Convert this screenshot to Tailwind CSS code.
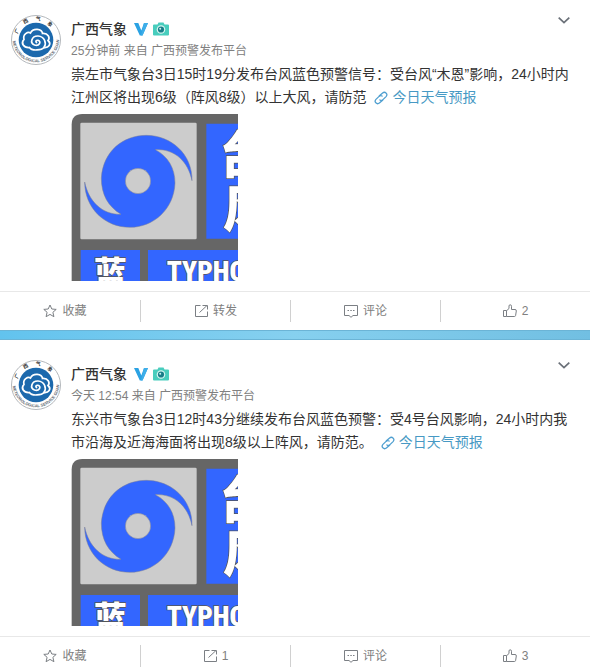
<!DOCTYPE html>
<html lang="zh-CN">
<head>
  <meta charset="UTF-8" />
  <meta name="viewport" content="width=device-width, initial-scale=1" />
  <title>广西气象的微博</title>
  <script src="https://cdn.jsdelivr.net/npm/@tailwindcss/browser@4"></script>
</head>
<body class="h-screen overflow-hidden bg-white text-[#333] font-['Liberation_Sans','Noto_Sans_CJK_SC',sans-serif]">

  <!-- 图标 -->
  <svg class="hidden" aria-hidden="true">
    <symbol id="avatar" viewBox="0 0 50 50">
      <circle cx="25" cy="25" r="24.5" fill="#fff" stroke="#b4b8bc" />
      <circle cx="25" cy="25" r="17.3" fill="#1c69ad" />
      <path id="arco-sup" d="M6.5 20 A19 19 0 0 1 43.5 20" fill="none" />
      <path id="arco-inf" d="M1.8 24 A23.2 23.2 0 0 0 48.2 24" fill="none" />
      <text font-size="5" font-weight="700" fill="#333"><textPath href="#arco-sup" startOffset="1">广 &#160; &#160; 西 &#160; &#160; 气 &#160; &#160; 象</textPath></text>
      <text font-size="4" font-weight="700" fill="#5a6570"><textPath href="#arco-inf" startOffset="2">METEOROLOGICAL SERVICE GUANGXI</textPath></text>
      <g fill="none" stroke="#fff" stroke-width="1.7" stroke-linecap="round">
        <path d="M18.5 32.5 C12.500 33 9.500 28 13 24.500 C11.500 19 17 16.500 19.500 18 C22 12.500 31 13.500 31.500 18.500 C37 18 39.500 22.500 37 25.500 C41 29 37.500 33 33 32.500 C31 35 21 36.500 18.500 32.500" />
        <path d="M33 32.500 C36 28 33.500 21.500 27 21 C20.500 20.800 18.500 28 23.500 30 C28 31.500 31 26.500 27 25.300 C25 25 24.300 26.800 25.500 27.500" />
      </g>
    </symbol>
    <symbol id="verified" viewBox="0 0 14 13">
      <path d="M0 0 H4.300 L7.300 7.500 L10 0 H14 L8.500 12.500 H5.800 Z" fill="#2ba2e3" />
      <path d="M10 0 H14 L8.500 12.500 H7 Z" fill="#3eaee9" />
    </symbol>
    <symbol id="camera" viewBox="0 0 16 14">
      <path d="M4.500 2.500 L5.500 .5 H10.500 L11.500 2.500 H15 Q16 2.500 16 3.500 V12.500 Q16 13.500 15 13.500 H1 Q0 13.500 0 12.500 V3.500 Q0 2.500 1 2.500 Z" fill="#48cdbd" />
      <circle cx="8" cy="7.500" r="4.300" fill="#d5f5f0" />
      <circle cx="8" cy="7.500" r="3.100" fill="#187d88" />
      <circle cx="7.200" cy="6.700" r="1" fill="#c8f2f0" />
    </symbol>
    <symbol id="chevron" viewBox="0 0 12 7">
      <path d="M.7 .7 L6 5.700 L11.300 .7" fill="none" stroke="#6a7078" stroke-width="1.700" />
    </symbol>
    <symbol id="link" viewBox="0 0 13 13">
      <g fill="none" stroke="#4f9fd0" stroke-width="1.200" stroke-linecap="round">
        <path d="M5 4.500 L8 1.800 Q9.700 .5 11.300 2 Q12.700 3.500 11.200 5.200 L8.300 8 Q7 9.200 5.500 8.300" />
        <path d="M8 8.500 L5 11.200 Q3.300 12.500 1.700 11 Q.3 9.500 1.800 7.800 L4.700 5 Q6 3.800 7.500 4.700" />
      </g>
    </symbol>
    <symbol id="star" viewBox="0 0 14 14">
      <path d="M7 1 L8.800 5 L13.200 5.400 L9.900 8.300 L10.900 12.700 L7 10.400 L3.100 12.700 L4.100 8.300 L.8 5.400 L5.200 5 Z" fill="none" stroke="#7b7f84" stroke-linejoin="round" />
    </symbol>
    <symbol id="share" viewBox="0 0 14 14">
      <path d="M6.500 1.500 H1.500 V12.500 H13.500 V7.500 M5.500 8.500 L13 1.500 M8.500 1.500 H13.500 V5.500" fill="none" stroke="#7b7f84" />
    </symbol>
    <symbol id="comment" viewBox="0 0 14 14">
      <path d="M.5 1.500 H13.500 V11.500 H9 L7 13.300 L5 11.500 H.5 Z" fill="none" stroke="#7b7f84" />
      <path d="M3.500 6.500 h1.500 M6.300 6.500 h1.500 M9 6.500 h1.500" stroke="#7b7f84" />
    </symbol>
    <symbol id="like" viewBox="0 0 14 14">
      <path d="M.5 6.500 H3.500 V12.500 H.5 Z M3.500 6.800 L6 4.500 V2 Q6 .8 7.200 .8 Q8.500 .8 8.500 2.300 V5.500 H12 Q13.500 5.500 13.300 7 L12.600 11.500 Q12.400 12.500 11.400 12.500 H3.500" fill="none" stroke="#7b7f84" stroke-linejoin="round" />
    </symbol>
    <symbol id="typhoon" viewBox="19 18 501 501">
      <path d="M21 519 V50 Q21 18 53 18 H520 V519 Z" fill="#666" />
      <rect x="47" y="44" width="349" height="350" rx="4" fill="#ccc" />
      <path d="M425 47 H520 V392 H425 Z M48 426 H226 V519 H48 Z M250 426 H520 V519 H250 Z" fill="#36f" />
      <path d="M110 210 C115 130 175 82 245 82 C320 82 384 140 382 218 C370 160 330 122 272 125 C310 145 331 180 331 225 C328 305 265 358 196 358 C120 358 60 300 60 222 C72 280 112 320 169 319 C130 295 110 260 110 210 Z" fill="#36f" stroke="#7a7f96" stroke-width="1.500" />
      <circle cx="220" cy="219" r="38" fill="#ccc" stroke="#7a7f96" stroke-width="1.500" />
      <g fill="#fff" stroke="#555" stroke-width="4" paint-order="stroke" font-weight="900">
        <text x="464" y="194" font-size="146">台</text>
        <text x="474" y="358" font-size="146">风</text>
        <text x="87" y="530" font-size="100">蓝</text>
        <text x="306" y="519" font-size="82" font-family="Roboto Condensed, DejaVu Sans Condensed, sans-serif">TYPHOON</text>
      </g>
    </symbol>
  </svg>

  <main>
    <article>
      <div class="flex gap-[10px] pt-[15px] pr-3 pb-[10px] pl-[11px]">
        <a href="#" aria-label="广西气象" class="size-[50px] shrink-0"><svg class="size-[50px]"><use href="#avatar" /></svg></a>
        <div class="min-w-0 flex-1 pt-1">
          <header class="flex h-5 items-center">
            <a href="#" class="text-sm leading-5 font-medium">广西气象</a>
            <svg class="ml-[7px] h-[13px] w-[14px]"><use href="#verified" /></svg>
            <svg class="ml-[5px] h-[14px] w-4"><use href="#camera" /></svg>
            <button type="button" aria-label="更多" class="-mt-2 ml-auto flex h-[18px] w-7 items-center justify-center self-start"><svg class="h-[7px] w-3"><use href="#chevron" /></svg></button>
          </header>
          <p class="text-xs leading-6 text-[#808080]"><a href="#">25分钟前</a> 来自 <a href="#">广西预警发布平台</a></p>
          <p class="text-sm leading-[23px]">崇左市气象台3日15时19分发布台风蓝色预警信号：受台风“木恩”影响，24小时内江州区将出现6级（阵风8级）以上大风，请防范 <a href="#" class="ml-1 whitespace-nowrap text-[#4799c4]"><svg class="mr-1 inline size-[14px] align-text-bottom"><use href="#link" /></svg>今日天气预报</a></p>
          <a href="#" aria-label="台风蓝色预警" class="mt-[5px] block size-[167px]"><svg class="size-[167px]"><use href="#typhoon" /></svg></a>
        </div>
      </div>
      <footer class="-ml-[10px] grid h-[39px] grid-cols-4 border-t border-[#e8e8e8] text-xs text-[#808080]">
        <button type="button" class="my-2 flex items-center justify-center gap-[5px]"><svg class="size-[14px]"><use href="#star" /></svg>收藏</button>
        <button type="button" class="my-2 flex items-center justify-center gap-[5px] border-l border-[#d0d0d0]"><svg class="size-[14px]"><use href="#share" /></svg>转发</button>
        <button type="button" class="my-2 flex items-center justify-center gap-[5px] border-l border-[#d0d0d0]"><svg class="size-[14px]"><use href="#comment" /></svg>评论</button>
        <button type="button" class="my-2 flex items-center justify-center gap-[5px] border-l border-[#d0d0d0]"><svg class="size-[14px]"><use href="#like" /></svg>2</button>
      </footer>
    </article>

    <div class="h-[10px] border-y border-[#6bb4d6] bg-linear-to-r from-[#62c3ee] via-[#86d0ef] to-[#71bfe2]"></div>

    <article>
      <div class="flex gap-[10px] pt-5 pr-3 pb-[10px] pl-[11px]">
        <a href="#" aria-label="广西气象" class="size-[50px] shrink-0"><svg class="size-[50px]"><use href="#avatar" /></svg></a>
        <div class="min-w-0 flex-1 pt-1">
          <header class="flex h-5 items-center">
            <a href="#" class="text-sm leading-5 font-medium">广西气象</a>
            <svg class="ml-[7px] h-[13px] w-[14px]"><use href="#verified" /></svg>
            <svg class="ml-[5px] h-[14px] w-4"><use href="#camera" /></svg>
            <button type="button" aria-label="更多" class="-mt-2 ml-auto flex h-[18px] w-7 items-center justify-center self-start"><svg class="h-[7px] w-3"><use href="#chevron" /></svg></button>
          </header>
          <p class="text-xs leading-6 text-[#808080]"><a href="#">今天 12:54</a> 来自 <a href="#">广西预警发布平台</a></p>
          <p class="text-sm leading-[23px]">东兴市气象台3日12时43分继续发布台风蓝色预警：受4号台风影响，24小时内我市沿海及近海海面将出现8级以上阵风，请防范。 <a href="#" class="ml-1 whitespace-nowrap text-[#4799c4]"><svg class="mr-1 inline size-[14px] align-text-bottom"><use href="#link" /></svg>今日天气预报</a></p>
          <a href="#" aria-label="台风蓝色预警" class="mt-[5px] block size-[167px]"><svg class="size-[167px]"><use href="#typhoon" /></svg></a>
        </div>
      </div>
      <footer class="-ml-[10px] grid h-[39px] grid-cols-4 border-t border-[#e8e8e8] text-xs text-[#808080]">
        <button type="button" class="my-2 flex items-center justify-center gap-[5px]"><svg class="size-[14px]"><use href="#star" /></svg>收藏</button>
        <button type="button" class="my-2 flex items-center justify-center gap-[5px] border-l border-[#d0d0d0]"><svg class="size-[14px]"><use href="#share" /></svg>1</button>
        <button type="button" class="my-2 flex items-center justify-center gap-[5px] border-l border-[#d0d0d0]"><svg class="size-[14px]"><use href="#comment" /></svg>评论</button>
        <button type="button" class="my-2 flex items-center justify-center gap-[5px] border-l border-[#d0d0d0]"><svg class="size-[14px]"><use href="#like" /></svg>3</button>
      </footer>
    </article>
  </main>
</body>
</html>
